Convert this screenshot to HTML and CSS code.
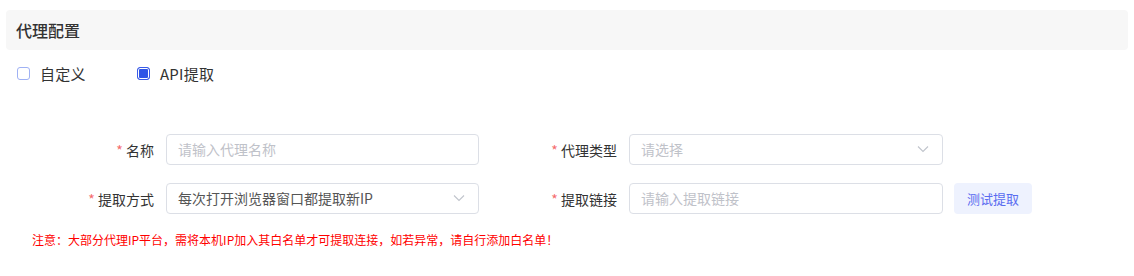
FILE: index.html
```html
<!DOCTYPE html>
<html lang="zh">
<head>
<meta charset="utf-8">
<link rel="stylesheet" href="styles.css">
</head>
<body>
<div class="page">
  <div class="section-head">代理配置</div>
  <div class="modes">
    <label class="check"><span class="box"></span><span class="check-text">自定义</span></label>
    <label class="check"><span class="box checked"></span><span class="check-text">API提取</span></label>
  </div>
  <div class="form">
    <div class="row">
      <div class="item">
        <div class="label"><span class="req">*</span> 名称</div>
        <div class="control"><span class="placeholder">请输入代理名称</span></div>
      </div>
      <div class="item">
        <div class="label"><span class="req">*</span> 代理类型</div>
        <div class="control select"><span class="placeholder">请选择</span>
          <svg class="arrow" width="12" height="8" viewBox="0 0 12 8"><path d="M1 1.5 L6 6.5 L11 1.5" fill="none" stroke="#c0c4cc" stroke-width="1.1"/></svg>
        </div>
      </div>
    </div>
    <div class="row">
      <div class="item">
        <div class="label"><span class="req">*</span> 提取方式</div>
        <div class="control select"><span class="value">每次打开浏览器窗口都提取新IP</span>
          <svg class="arrow" width="12" height="8" viewBox="0 0 12 8"><path d="M1 1.5 L6 6.5 L11 1.5" fill="none" stroke="#c0c4cc" stroke-width="1.1"/></svg>
        </div>
      </div>
      <div class="item">
        <div class="label"><span class="req">*</span> 提取链接</div>
        <div class="control"><span class="placeholder">请输入提取链接</span></div>
      </div>
      <button class="btn">测试提取</button>
    </div>
    <div class="note">注意：大部分代理IP平台，需将本机IP加入其白名单才可提取连接，如若异常，请自行添加白名单！</div>
  </div>
</div>
</body>
</html>
```

FILE: styles.css
```css
* { box-sizing: border-box; }
body {
  margin: 0;
  background: #fff;
  font-family: "Noto Sans CJK SC", "Noto Sans", sans-serif;
  color: #333;
}
.page {
  padding: 10px 6px 0 6px;
}
.section-head {
  height: 40px;
  background: #f7f7f7;
  border-radius: 4px;
  padding-left: 10px;
  display: flex;
  align-items: center;
  font-size: 16px;
  font-weight: 500;
  color: #333;
}
.modes {
  display: flex;
  align-items: center;
  height: 26px;
  margin-top: 10px;
  padding-left: 11px;
}
.check {
  display: flex;
  align-items: center;
  margin-right: 51px;
  font-size: 15px;
  color: #333;
}
.box {
  width: 13px;
  height: 13px;
  border: 1px solid #9fb1f4;
  border-radius: 3px;
  margin-right: 10px;
  background: #fff;
}
.box.checked {
  border-color: #3a5be8;
  background: #2f55e6;
  box-shadow: inset 0 0 0 1px #fff;
}
.check-text { letter-spacing: 0.3px; }
.form {
  padding-top: 48px;
  padding-left: 26px;
}
.row {
  display: flex;
  align-items: center;
  margin-bottom: 18px;
}
.item {
  display: flex;
  align-items: center;
  margin-right: 16px;
}
.item + .item { margin-right: 11px; }
.label {
  width: 134px;
  text-align: right;
  padding-right: 12px;
  font-size: 14px;
  color: #333;
  white-space: nowrap;
}
.req { color: #f56c6c; }
.control {
  width: 313px;
  height: 31px;
  border: 1px solid #dcdfe6;
  border-radius: 4px;
  padding: 0 11px 1px;
  display: flex;
  align-items: center;
  font-size: 14px;
}
.item + .item .control { width: 314px; }
.placeholder { color: #bfc2c9; }
.value { color: #555; }
.select { justify-content: space-between; }
.arrow { margin-right: 2px; }
.btn {
  width: 78px;
  height: 31px;
  border: none;
  border-radius: 4px;
  background: #eef2fe;
  color: #5a6cf0;
  font-family: inherit;
  font-size: 13px;
  padding: 0 0 1px;
}
.note {
  margin-top: -1px;
  padding-left: 0;
  font-size: 12px;
  color: #ff0000;
}
```
